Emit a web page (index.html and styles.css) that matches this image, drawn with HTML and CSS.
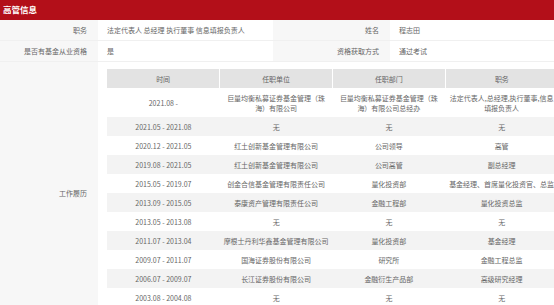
FILE: index.html
```html
<!DOCTYPE html>
<html lang="zh">
<head>
<meta charset="utf-8">
<title>高管信息</title>
<link rel="stylesheet" href="styles.css">
</head>
<body>
<div class="page">
  <div class="title">高管信息</div>
  <div class="info">
    <div class="label">职务</div>
    <div class="value">法定代表人 总经理 执行董事 信息填报负责人</div>
    <div class="label">姓名</div>
    <div class="value">程志田</div>

    <div class="label">是否有基金从业资格</div>
    <div class="value">是</div>
    <div class="label">资格获取方式</div>
    <div class="value">通过考试</div>

    <div class="label label-tall">工作履历</div>
    <div class="value value-wide">
      <table class="history">
        <thead>
          <tr><th>时间</th><th>任职单位</th><th>任职部门</th><th>职务</th></tr>
        </thead>
        <tbody>
          <tr><td>2021.08 -</td><td>巨量均衡私募证券基金管理（珠海）有限公司</td><td>巨量均衡私募证券基金管理（珠海）有限公司总经办</td><td>法定代表人,总经理,执行董事,信息填报负责人</td></tr>
          <tr><td>2021.05 - 2021.08</td><td>无</td><td>无</td><td>无</td></tr>
          <tr><td>2020.12 - 2021.05</td><td>红土创新基金管理有限公司</td><td>公司领导</td><td>高管</td></tr>
          <tr><td>2019.08 - 2021.05</td><td>红土创新基金管理有限公司</td><td>公司高管</td><td>副总经理</td></tr>
          <tr><td>2015.05 - 2019.07</td><td>创金合信基金管理有限责任公司</td><td>量化投资部</td><td>基金经理、首席量化投资官、总监</td></tr>
          <tr><td>2013.09 - 2015.05</td><td>泰康资产管理有限责任公司</td><td>金融工程部</td><td>量化投资总监</td></tr>
          <tr><td>2013.05 - 2013.08</td><td>无</td><td>无</td><td>无</td></tr>
          <tr><td>2011.07 - 2013.04</td><td>摩根士丹利华鑫基金管理有限公司</td><td>量化投资部</td><td>基金经理</td></tr>
          <tr><td>2009.07 - 2011.07</td><td>国海证券股份有限公司</td><td>研究所</td><td>金融工程总监</td></tr>
          <tr><td>2006.07 - 2009.07</td><td>长江证券股份有限公司</td><td>金融衍生产品部</td><td>高级研究经理</td></tr>
          <tr><td>2003.08 - 2004.08</td><td>无</td><td>无</td><td>无</td></tr>
        </tbody>
      </table>
    </div>
  </div>
</div>
</body>
</html>
```

FILE: styles.css
```css
html, body {
  margin: 0;
  padding: 0;
  overflow: hidden;
  background: #ffffff;
}

.page {
  width: 567px;
  font-family: "Noto Sans CJK SC", "Noto Sans", sans-serif;
  color: #666666;
  font-size: 7px;
}

.title {
  background: #b30f19;
  color: #ffffff;
  font-weight: bold;
  font-size: 8.5px;
  height: 20px;
  line-height: 19px;
  padding-left: 3px;
  box-sizing: border-box;
}

.info {
  display: grid;
  grid-template-columns: 98px 175px 117px 177px;
}

.label {
  background: #f7f7f7;
  text-align: right;
  padding-right: 11px;
  line-height: 20px;
  border-bottom: 1px solid #f0f0f0;
  white-space: nowrap;
}

.value {
  padding-left: 9px;
  line-height: 20px;
  border-bottom: 1px solid #f0f0f0;
  white-space: nowrap;
}

.label-tall {
  display: flex;
  align-items: center;
  justify-content: flex-end;
  border-bottom: none;
}

.value-wide {
  grid-column: 2 / 5;
  padding: 7px 9px 16px 9px;
  border-bottom: none;
}

.history {
  width: 100%;
  border-collapse: collapse;
  table-layout: fixed;
  white-space: normal;
  text-spacing-trim: space-all;
}

.history th,
.history td {
  text-align: center;
  font-weight: normal;
  line-height: 10px;
  padding: 4.5px 3px;
}

.history th {
  background: #e3e3e3;
  border-left: 1px solid #ffffff;
}

.history th:first-child {
  border-left: none;
}

.history tbody tr:nth-child(even) td {
  background: #f3f3f3;
}
```
